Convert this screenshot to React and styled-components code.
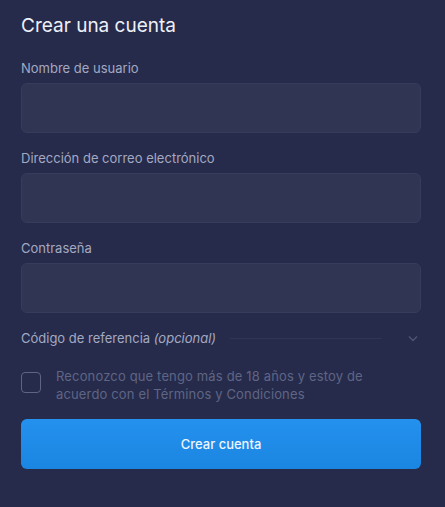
import React, { useState } from "react";
import styled, { createGlobalStyle } from "styled-components";

const GlobalStyle = createGlobalStyle`
  html, body {
    margin: 0;
    padding: 0;
    background: #262b4b;
  }
  * { box-sizing: border-box; }
`;

const Panel = styled.div`
  width: 445px;
  height: 507px;
  background: #262b4b;
  padding: 14px 24px 0 21px;
  font-family: Inter, "Noto Sans", sans-serif;
  display: flex;
  flex-direction: column;
`;

const Title = styled.h1`
  margin: 0;
  font-size: 19px;
  font-weight: 400;
  color: #eef0f7;
  line-height: 24px;
`;

const Field = styled.div`
  display: flex;
  flex-direction: column;
  margin-top: ${(p) => (p.first ? "22px" : "17px")};
`;

const Label = styled.label`
  font-size: 13px;
  color: #a4a9c2;
  line-height: 16px;
  margin-bottom: 7px;
`;

const Input = styled.input`
  height: 50px;
  width: 400px;
  background: #2f3553;
  border: 1px solid #363c5c;
  border-radius: 6px;
  outline: none;
  color: #fff;
  font: inherit;
  font-size: 14px;
  padding: 0 14px;
`;

const Referral = styled.div`
  display: flex;
  align-items: center;
  margin-top: 17px;
  height: 16px;
  width: 400px;
`;

const RefText = styled.span`
  font-size: 13px;
  color: #a4a9c2;
  white-space: nowrap;
  em { font-style: italic; }
`;

const Rule = styled.div`
  flex: 1;
  height: 1px;
  background: #2f3554;
  margin: 0 26px 0 14px;
`;

const Chevron = styled.svg`
  width: 10px;
  height: 7px;
  margin-right: 3px;
`;

const CheckRow = styled.div`
  display: flex;
  align-items: flex-start;
  margin-top: 21px;
`;

const Box = styled.button`
  width: 20px;
  height: 21px;
  flex: none;
  border: 1.5px solid #5e6485;
  border-radius: 4px;
  background: ${(p) => (p.checked ? "#1f8ae6" : "transparent")};
  margin-top: 5px;
  padding: 0;
  cursor: pointer;
`;

const CheckText = styled.p`
  margin: 0 0 0 15px;
  font-size: 13px;
  line-height: 18px;
  letter-spacing: 0.15px;
  color: #5f6585;
  width: 330px;
`;

const Submit = styled.button`
  margin-top: 16px;
  width: 400px;
  height: 50px;
  border: none;
  border-radius: 6px;
  background: linear-gradient(180deg, #2591ee 0%, #1a86e2 100%);
  color: #eef5ff;
  font: inherit;
  font-size: 13px;
  font-weight: 500;
  cursor: pointer;
`;

export default function App() {
  const [checked, setChecked] = useState(false);

  return (
    <>
      <GlobalStyle />
      <Panel>
        <Title>Crear una cuenta</Title>
        <Field first>
          <Label>Nombre de usuario</Label>
          <Input type="text" />
        </Field>
        <Field>
          <Label>Dirección de correo electrónico</Label>
          <Input type="email" />
        </Field>
        <Field>
          <Label>Contraseña</Label>
          <Input type="password" />
        </Field>
        <Referral>
          <RefText>
            Código de referencia <em>(opcional)</em>
          </RefText>
          <Rule />
          <Chevron viewBox="0 0 10 7">
            <path d="M1 1.5 L5 5.5 L9 1.5" fill="none" stroke="#4e5475" strokeWidth="1.4" />
          </Chevron>
        </Referral>
        <CheckRow>
          <Box checked={checked} onClick={() => setChecked(!checked)} />
          <CheckText>
            Reconozco que tengo más de 18 años y estoy de acuerdo con el Términos y Condiciones
          </CheckText>
        </CheckRow>
        <Submit>Crear cuenta</Submit>
      </Panel>
    </>
  );
}
